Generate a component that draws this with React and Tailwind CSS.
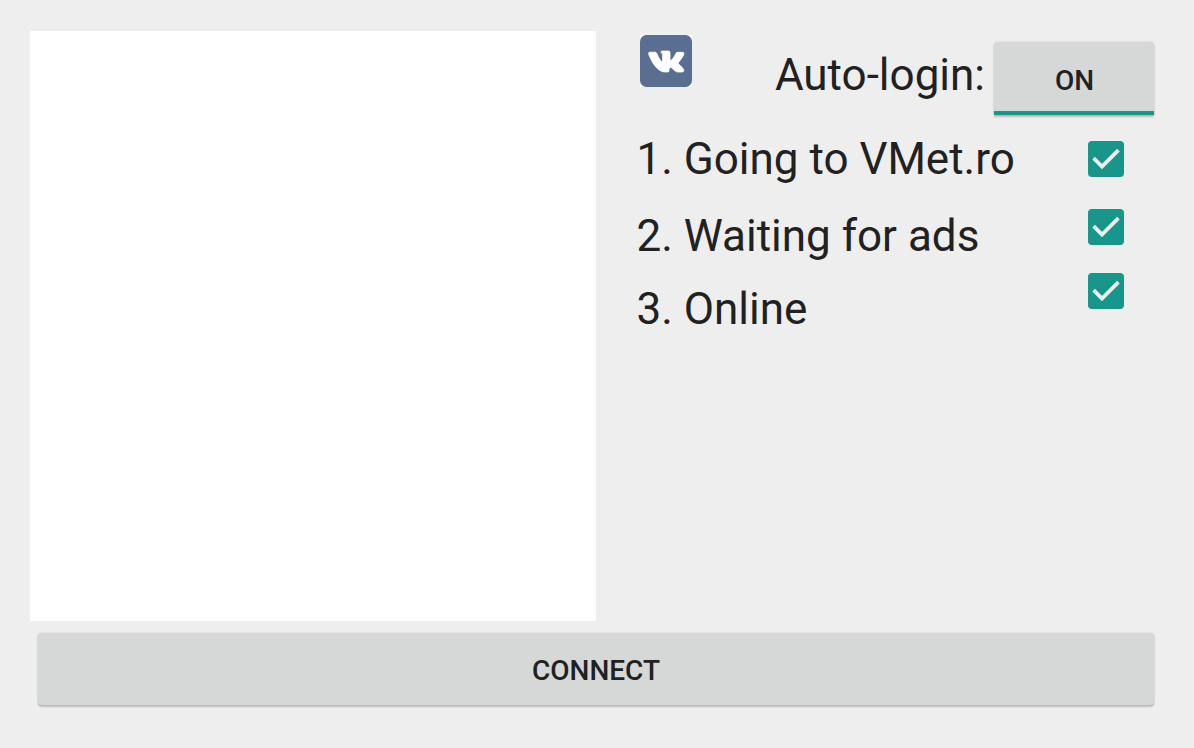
import React, { useState } from "react";

const steps = ["1. Going to VMet.ro", "2. Waiting for ads", "3. Online"];

const VkLogo = () => (
  <svg viewBox="0 0 52 52" className="w-[52px] h-[52px]">
    <rect width="52" height="52" fill="#fff" />
    <rect width="52" height="52" rx="6.500" fill="#5a6e92" />
    <path
      transform="translate(-1 0)"
      fill="#fff"
      stroke="#fff"
      strokeWidth="0.8"
      strokeLinejoin="round"
      d="M26.500 37h2.300c.6-.1 1-.4 1.100-1 .1-2 .5-3.400 1.700-3.600 1.300-.2 2.800 2.400 4.600 3.700 1 .8 1.900.9 3 .9h4c1.800-.1 2.100-1.300 1.200-2.700-.9-1.600-2.500-3.100-4.500-5-.8-.9-.8-1.300 0-2.400 2-2.600 4.300-5.600 4.900-7.700.4-1.300-.2-1.900-1.500-1.900h-4.700c-1 0-1.400.5-1.800 1.300-1.100 2.400-2.700 5-4.300 6.400-.9.800-1.500.5-1.500-.9v-6c0-1.500-.4-2.100-1.800-2.100h-5.700c-1.400 0-2 .9-1.200 1.700.9.900 1.300 1.300 1.300 3v4.800c0 1-.5 1.400-1.200.9-1.600-1.500-3.400-4.900-4.500-7.700-.4-1-.8-1.500-2-1.500h-4.700c-1.500 0-2 .8-1.500 2 1.200 3.200 3.500 8.200 6.500 12 2.800 3.600 6.400 5.800 10 5.800z"
    />
  </svg>
);

const Checkbox = ({ label, checked, onChange }) => (
  <button
    role="checkbox"
    aria-label={label}
    aria-checked={checked}
    onClick={onChange}
    className="block w-9 h-9 rounded-[4px] bg-[#179689]"
  >
    {checked && (
      <svg viewBox="0 0 36 36" className="w-9 h-9" fill="none">
        <path d="M5.600 17.100L14 25.500 30.400 9.100" stroke="#eeeeee" strokeWidth="3.800" />
      </svg>
    )}
  </button>
);

const App = () => {
  const [autoLogin, setAutoLogin] = useState(true);
  const [done, setDone] = useState([true, true, true]);

  const toggleStep = (index) => {
    setDone(done.map((value, i) => (i === index ? !value : value)));
  };

  return (
    <div className="w-[1194px] h-[748px] bg-[#eeeeee] pt-[31px] pl-[30px] pr-10 font-['Roboto',sans-serif] text-[#212121] overflow-hidden">
      <div className="flex h-[590px]">
        {/* Page preview */}
        <div className="w-[566px] bg-white" />

        <div className="flex-1 pl-10">
          {/* Logo and auto-login toggle */}
          <div className="flex items-start h-[102px] pl-1">
            <div className="pt-1">
              <VkLogo />
            </div>
            <span className="ml-auto mr-[9px] pt-[18px] text-[44px] leading-[52px] whitespace-nowrap">
              Auto-login:
            </span>
            <button
              className="mt-[11px] w-40 h-[73px] flex flex-col rounded-t-[4px] bg-[#d6d8d7] text-[28px] font-medium shadow-[0_2px_2px_rgba(0,0,0,0.2),0_0_2px_rgba(0,0,0,0.15)]"
              onClick={() => setAutoLogin(!autoLogin)}
            >
              <span className="w-full h-[69px] pt-[22px] pl-px leading-[33px]">
                {autoLogin ? "ON" : "OFF"}
              </span>
              <span className="w-full h-1 bg-[#179689]" />
            </button>
          </div>

          {/* Connection steps */}
          <div className="flex justify-between">
            <div className="pl-[0.5px] text-[44px] leading-[52px] whitespace-nowrap">
              <p>{steps[0]}</p>
              <p className="mt-[25px]">{steps[1]}</p>
              <p className="mt-[21px]">{steps[2]}</p>
            </div>
            <div className="pt-2 mr-[30px]">
              <Checkbox label={steps[0]} checked={done[0]} onChange={() => toggleStep(0)} />
              <div className="mt-8">
                <Checkbox label={steps[1]} checked={done[1]} onChange={() => toggleStep(1)} />
              </div>
              <div className="mt-7">
                <Checkbox label={steps[2]} checked={done[2]} onChange={() => toggleStep(2)} />
              </div>
            </div>
          </div>
        </div>
      </div>

      <button className="mt-3 ml-2 w-[1116px] h-[72px] rounded-[4px] bg-[#d6d8d7] text-[28px] leading-[33px] font-medium pt-[3px] shadow-[0_2px_2px_rgba(0,0,0,0.2),0_0_2px_rgba(0,0,0,0.15)]">
        CONNECT
      </button>
    </div>
  );
};

export default App;
